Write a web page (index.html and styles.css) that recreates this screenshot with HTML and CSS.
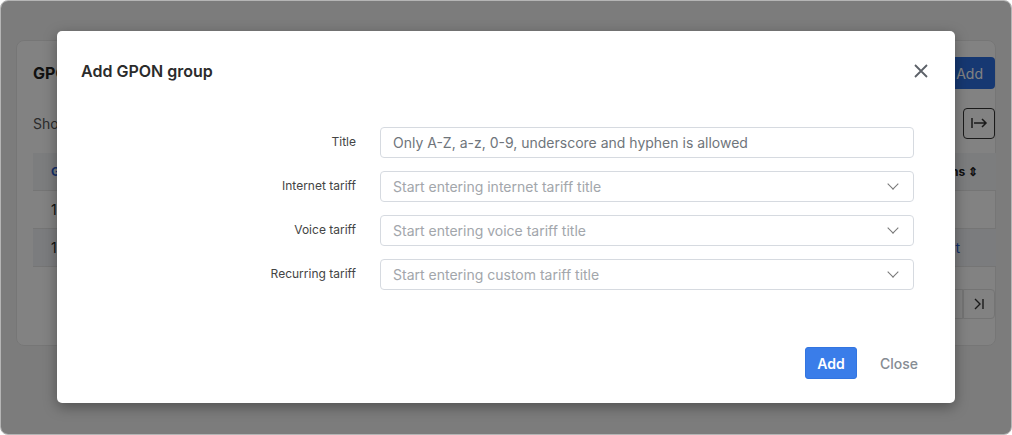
FILE: index.html
```html
<!DOCTYPE html>
<html lang="en">
<head>
  <link rel="stylesheet" href="styles.css">
  <title>GPON groups</title>
</head>
<body>
<div class="frame">
  <div class="page">
    <div class="card">
      <div class="card-head">
        <h2 class="card-title">GPON groups</h2>
        <button class="btn-blue">Add</button>
      </div>
      <div class="toolbar">
        <span class="show">Showing 1 to 2 of 2 entries</span>
        <button class="icon-btn">
          <svg width="18" height="14" viewBox="0 0 18 14"><path d="M2 2v10M4 7h12M12 3l4 4-4 4" fill="none" stroke="#333" stroke-width="1.5"/></svg>
        </button>
      </div>
      <table class="table">
        <tr class="thead"><th class="link">GPON group</th><th></th><th class="right">Actions &#8661;</th></tr>
        <tr><td>1</td><td></td><td></td></tr>
        <tr class="shade"><td>12</td><td></td><td class="right link edit">Edit</td></tr>
      </table>
      <div class="pager">
        <span class="pcell"></span>
        <span class="pcell">
          <svg width="14" height="14" viewBox="0 0 14 14"><path d="M3 2l5 5-5 5M11 2v10" fill="none" stroke="#333" stroke-width="1.4"/></svg>
        </span>
      </div>
    </div>
  </div>

  <div class="overlay"></div>

  <div class="modal">
    <div class="modal-head">
      <h3 class="modal-title">Add GPON group</h3>
      <button class="close-x">
        <svg width="14" height="14" viewBox="0 0 14 14"><path d="M1 1l12 12M13 1L1 13" stroke="#5c6168" stroke-width="1.8"/></svg>
      </button>
    </div>
    <div class="form">
      <label>Title</label>
      <div class="field dark">Only A-Z, a-z, 0-9, underscore and hyphen is allowed</div>
      <label>Internet tariff</label>
      <div class="field">Start entering internet tariff title<span class="caret"></span></div>
      <label>Voice tariff</label>
      <div class="field">Start entering voice tariff title<span class="caret"></span></div>
      <label>Recurring tariff</label>
      <div class="field">Start entering custom tariff title<span class="caret"></span></div>
    </div>
    <div class="modal-foot">
      <button class="btn-add">Add</button>
      <button class="btn-close">Close</button>
    </div>
  </div>
</div>
</body>
</html>
```

FILE: styles.css
```css
body {
  margin: 0;
  background: #fff;
  font-family: Inter, "Noto Sans", sans-serif;
}

.frame {
  position: relative;
  width: 1010px;
  height: 433px;
  border: 1px solid #b5b5b5;
  border-radius: 8px;
  overflow: hidden;
  background: #f4f4f4;
}

.page {
  padding: 39px 15px;
}

.card {
  box-sizing: border-box;
  background: #fff;
  border: 1px solid #e8e8e8;
  border-radius: 8px;
  height: 306px;
  padding: 16px 0 0 16px;
}

.card-head {
  display: flex;
  justify-content: space-between;
  align-items: center;
  height: 32px;
}
.card-title {
  margin: 0;
  font-size: 16px;
  font-weight: 700;
  color: #222;
}
.btn-blue {
  background: #2c6fe0;
  color: #fff;
  border: none;
  border-radius: 4px;
  height: 32px;
  padding: 0 12px;
  font-family: inherit;
  font-size: 14px;
}

.toolbar {
  display: flex;
  justify-content: space-between;
  align-items: center;
  margin-top: 18px;
  height: 32px;
}
.show {
  font-size: 14px;
  color: #555;
}
.icon-btn {
  width: 32px;
  height: 31px;
  border: 1.5px solid #333;
  border-radius: 4px;
  background: #fff;
  display: flex;
  align-items: center;
  justify-content: center;
  padding: 0;
}

.table {
  margin-top: 14px;
  width: 963px;
  border-collapse: collapse;
  font-size: 14px;
  color: #222;
}
.table th, .table td {
  text-align: left;
  padding: 0 18px;
  height: 37px;
  border-bottom: 1px solid #e6e6e6;
}
.thead {
  background: #f4f5f7;
  font-size: 12px;
}
.shade {
  background: #f2f4f7;
}
.link {
  color: #2c5fd0;
}
.right {
  text-align: right !important;
}
.table td.edit {
  padding-right: 36px;
}

.pager {
  display: flex;
  justify-content: flex-end;
  margin-top: 22px;
}
.pcell {
  width: 30px;
  height: 28px;
  border: 1px solid #e3e3e3;
  display: flex;
  align-items: center;
  justify-content: center;
}
.pcell:last-child {
  border-radius: 0 4px 4px 0;
}

.overlay {
  position: absolute;
  inset: 0;
  background: rgba(0, 0, 0, 0.49);
}

.modal {
  position: absolute;
  left: 56px;
  top: 30px;
  width: 898px;
  height: 372px;
  background: #fff;
  border-radius: 5px;
  box-shadow: 0 4px 14px rgba(0, 0, 0, 0.35);
  display: flex;
  flex-direction: column;
}

.modal-head {
  display: flex;
  justify-content: space-between;
  align-items: center;
  padding: 30px 27px 0 24px;
}
.modal-title {
  margin: 0;
  font-size: 16px;
  font-weight: 600;
  color: #2b2b2b;
}
.close-x {
  background: none;
  border: none;
  padding: 0;
  display: flex;
}

.form {
  display: grid;
  grid-template-columns: 275px 534px;
  column-gap: 24px;
  row-gap: 13px;
  padding: 0 24px;
  margin-top: 46px;
  align-items: center;
}
.form label {
  text-align: right;
  font-size: 12px;
  color: #444;
  margin-top: -2px;
}
.field {
  position: relative;
  height: 29px;
  border: 1px solid #d6dae0;
  border-radius: 4px;
  padding-left: 12px;
  display: flex;
  align-items: center;
  font-size: 14px;
  color: #a2a6ab;
}
.field.dark {
  color: #6f757b;
}
.caret {
  position: absolute;
  right: 16px;
  top: 8px;
  width: 7px;
  height: 7px;
  border-right: 1.5px solid #777;
  border-bottom: 1.5px solid #777;
  transform: rotate(45deg);
}

.modal-foot {
  margin-top: auto;
  display: flex;
  justify-content: flex-end;
  align-items: center;
  padding: 0 25px 24px 0;
}
.btn-add {
  background: #3a7de9;
  color: #fff;
  border: 1px solid #3375e0;
  border-radius: 3px;
  height: 32px;
  width: 52px;
  font-family: inherit;
  font-size: 14px;
  font-weight: 600;
}
.btn-close {
  background: none;
  border: none;
  color: #868c93;
  font-family: inherit;
  font-size: 14px;
  font-weight: 500;
  padding: 0 12px;
  margin-left: 11px;
}
```
